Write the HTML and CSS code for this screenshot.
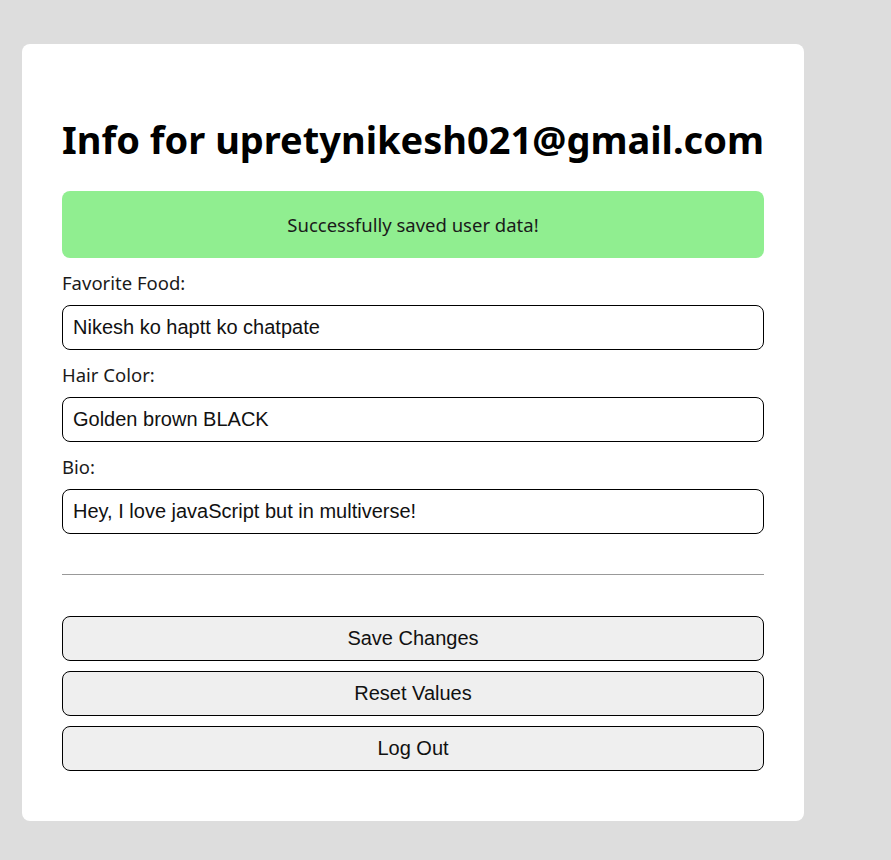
FILE: index.html
```html
<!DOCTYPE html>
<html lang="en">
<head>
<meta charset="utf-8">
<title>User Info</title>
<link rel="stylesheet" href="styles.css">
</head>
<body>
<main class="card">
  <h1 class="title">Info for upretynikesh021@gmail.com</h1>
  <div class="success">Successfully saved user data!</div>
  <form class="form">
    <label class="label" for="food">Favorite Food:</label>
    <input class="field" id="food" type="text" value="Nikesh ko haptt ko chatpate">
    <label class="label" for="hair">Hair Color:</label>
    <input class="field" id="hair" type="text" value="Golden brown BLACK">
    <label class="label" for="bio">Bio:</label>
    <input class="field" id="bio" type="text" value="Hey, I love javaScript but in multiverse!">
  </form>
  <hr class="divider">
  <div class="actions">
    <button class="btn" type="button">Save Changes</button>
    <button class="btn" type="button">Reset Values</button>
    <button class="btn" type="button">Log Out</button>
  </div>
</main>
</body>
</html>
```
FILE: styles.css
```css
html, body {
  margin: 0;
  padding: 0;
}
body {
  background: #dddddd;
  font-family: "Noto Sans", "Open Sans", sans-serif;
  color: #111;
}
.card {
  box-sizing: border-box;
  width: 782px;
  margin: 44px 0 0 22px;
  padding: 71px 40px 50px;
  background: #ffffff;
  border-radius: 8px;
  display: flex;
  flex-direction: column;
}
.title {
  margin: 0 0 28px;
  font-size: 38px;
  line-height: 48px;
  font-weight: 700;
  color: #000;
  white-space: nowrap;
}
.success {
  height: 67px;
  display: flex;
  align-items: center;
  justify-content: center;
  background: #90ee90;
  border-radius: 8px;
  font-size: 18.5px;
  color: #1a1a1a;
}
.form {
  display: flex;
  flex-direction: column;
}
.label {
  margin-top: 12px;
  line-height: 26px;
  font-size: 18.5px;
  color: #1a1a1a;
}
.field {
  box-sizing: border-box;
  margin-top: 9px;
  height: 45px;
  width: 100%;
  padding: 0 10px;
  border: 1px solid #000;
  border-radius: 8px;
  font-family: "Liberation Sans", Arial, sans-serif;
  font-size: 20px;
  color: #111;
  background: #fff;
}
.divider {
  margin: 40px 0 0;
  border: 0;
  border-top: 1px solid #999;
  height: 0;
}
.actions {
  margin-top: 41px;
  display: flex;
  flex-direction: column;
  gap: 10px;
}
.btn {
  box-sizing: border-box;
  height: 45px;
  width: 100%;
  border: 1px solid #000;
  border-radius: 8px;
  background: #efefef;
  font-family: "Liberation Sans", Arial, sans-serif;
  font-size: 20px;
  color: #111;
}
```
